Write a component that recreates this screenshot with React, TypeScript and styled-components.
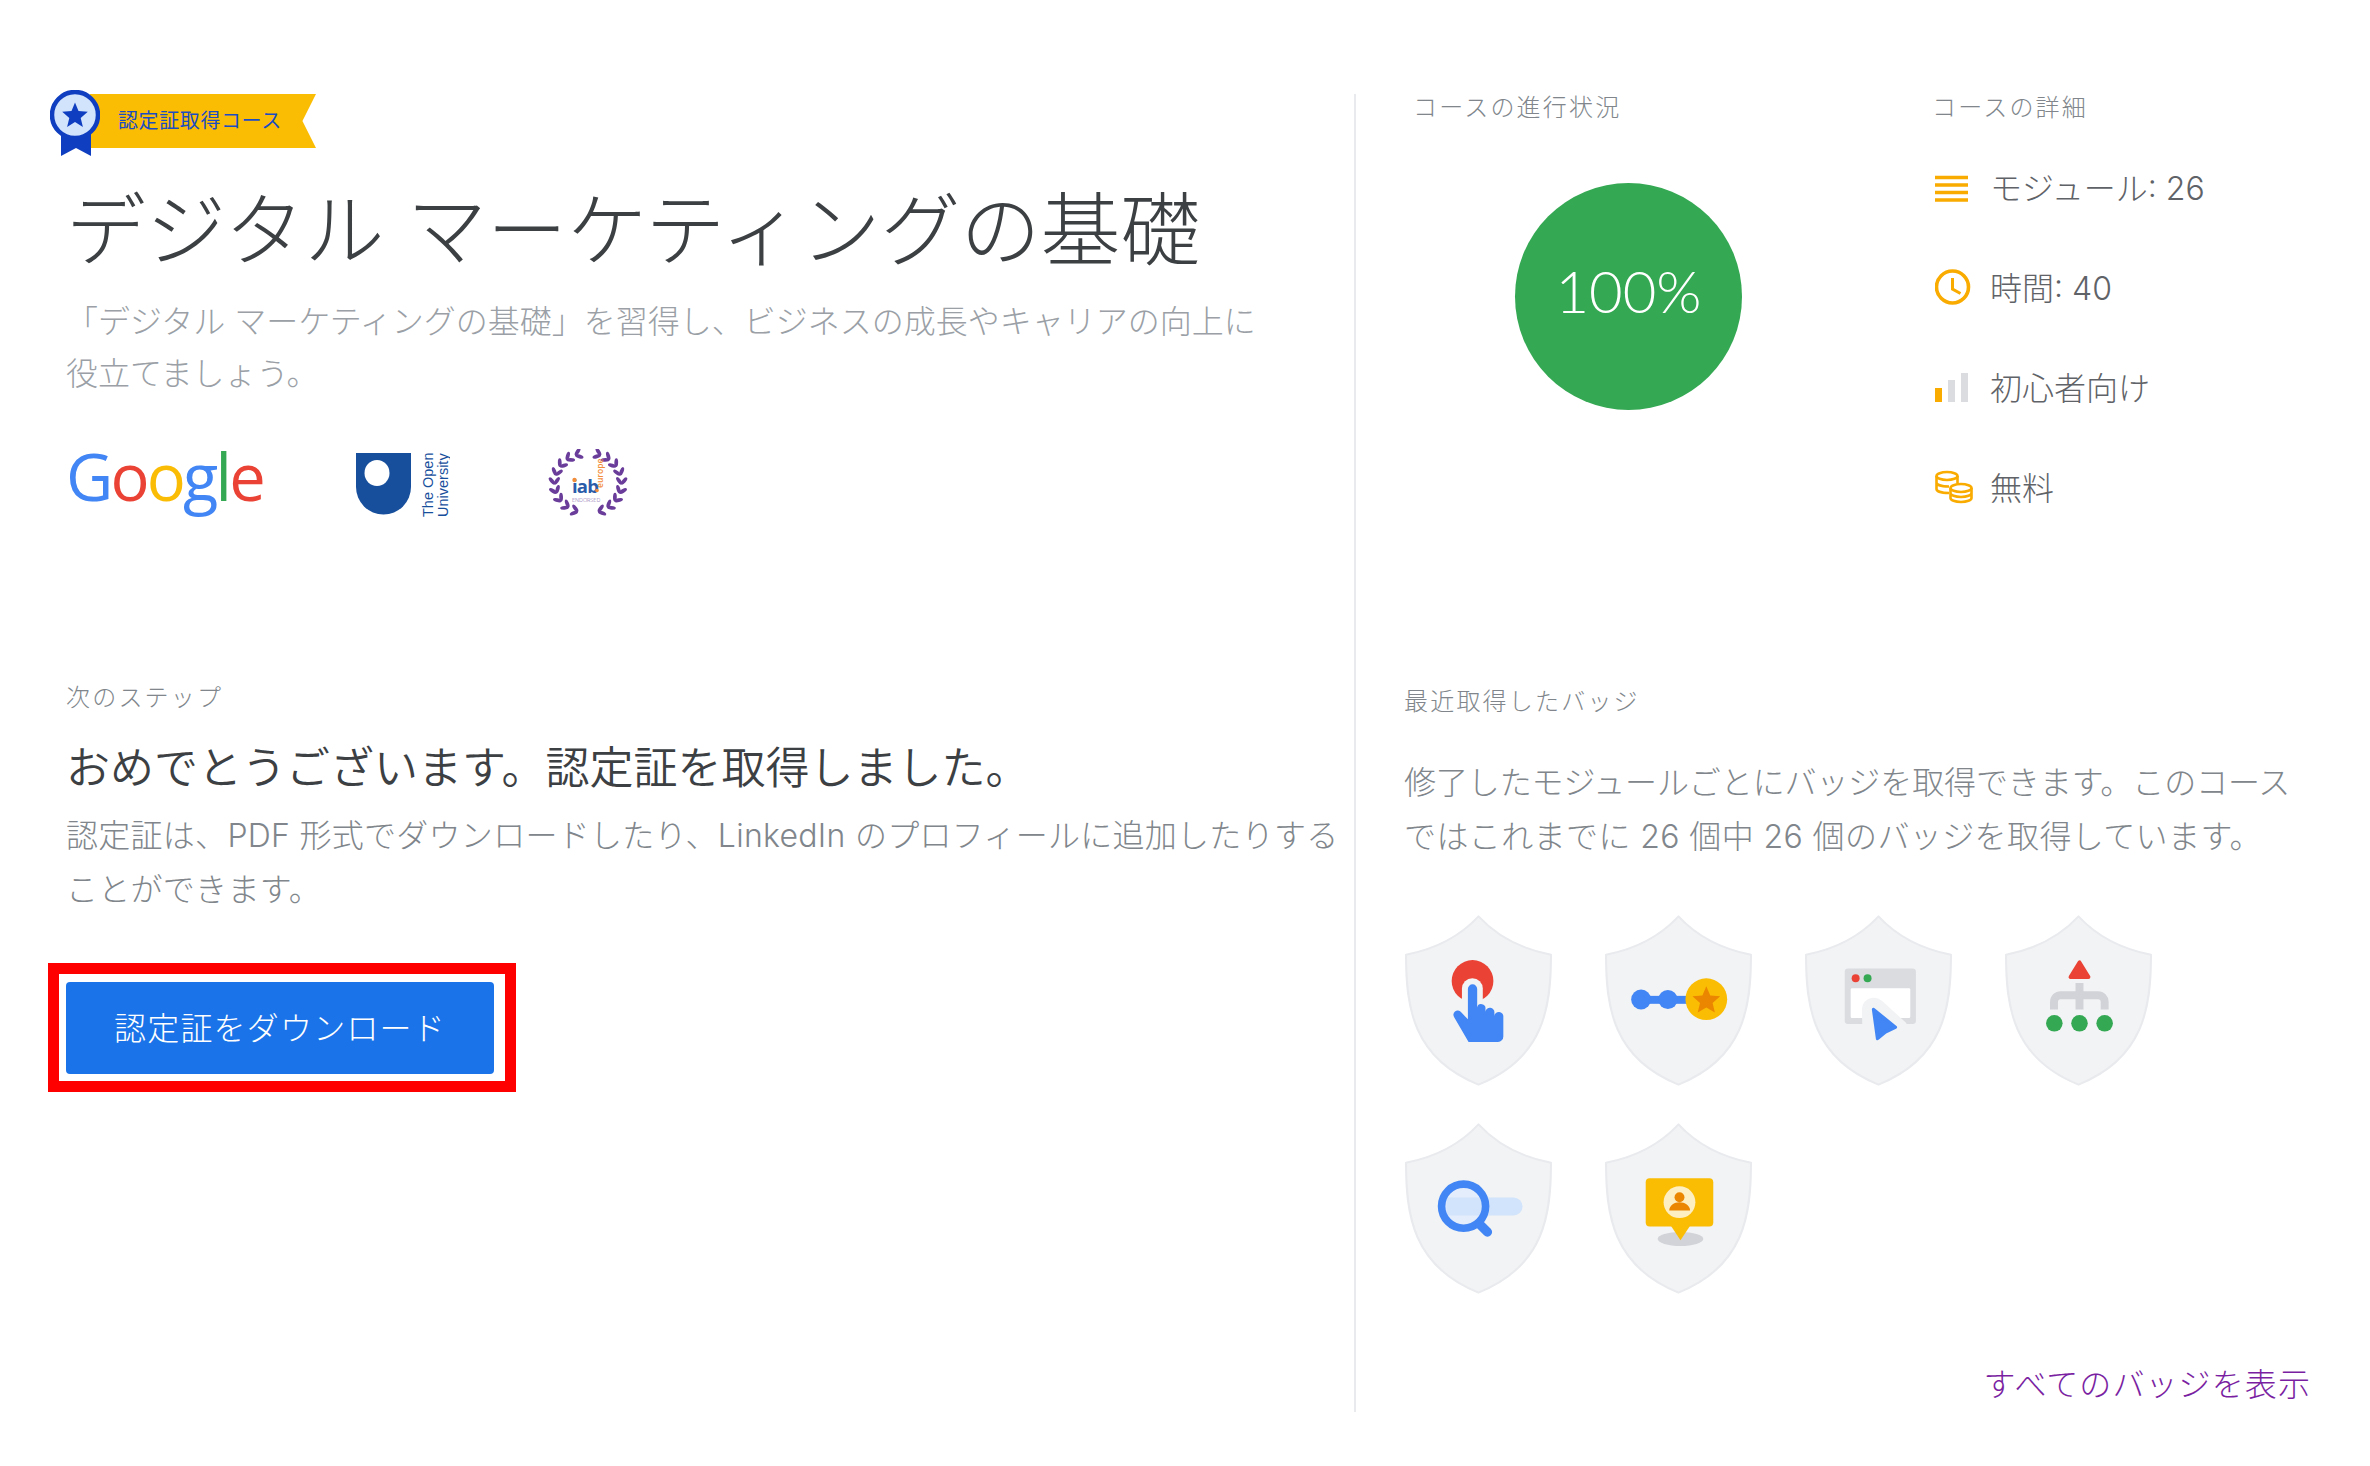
import React from "react";
import styled, { createGlobalStyle } from "styled-components";

const Global = createGlobalStyle`
  html, body { margin: 0; padding: 0; background: #fff; }
  body { font-family: Inter, "Noto Sans CJK JP", sans-serif; font-weight: 300; color: #80868b; }
`;

const Page = styled.div`
  width: 2370px;
  height: 1466px;
  display: grid;
  grid-template-columns: 1354px 1fr;
  align-items: start;
  padding-top: 90px;
  box-sizing: border-box;
  overflow: hidden;
`;

const LeftColumn = styled.main`
  padding-left: 66px;
  display: flex;
  flex-direction: column;
  align-items: flex-start;
`;

const Ribbon = styled.div`
  position: relative;
  margin-left: -16px;
  width: 266px;
  height: 66px;
  display: flex;
  align-items: flex-start;
`;

const RibbonBand = styled.div`
  margin-top: 4px;
  margin-left: 40px;
  width: 226px;
  height: 54px;
  background: #fbbc04;
  clip-path: polygon(0 0, 100% 0, 94% 50%, 100% 100%, 0 100%);
  color: #1a4cc2;
  font-size: 20px;
  font-weight: 400;
  letter-spacing: 0.6px;
  line-height: 54px;
  padding-left: 28px;
  box-sizing: border-box;
  white-space: nowrap;
`;

const Medal = styled.svg`
  position: absolute;
  left: 0;
  top: 0;
`;

const Title = styled.h1`
  margin: 26px 0 0;
  font-size: 80px;
  line-height: 96px;
  font-weight: 300;
  color: #3c4043;
  white-space: nowrap;
`;

const Lead = styled.p`
  margin: 18px 0 0;
  font-size: 32px;
  line-height: 52px;
  color: #9aa0a6;
  white-space: nowrap;
`;

const Logos = styled.div`
  margin-top: 49px;
  height: 68px;
  display: flex;
  align-items: flex-start;
`;

const GoogleLogo = styled.div`
  width: 290px;
  font-family: "Open Sans", sans-serif;
  font-size: 65px;
  line-height: 68px;
  font-weight: 500;
  letter-spacing: -2.8px;
  margin-top: -7px;
`;

const Letter = styled.span<{ $c: string }>`
  color: ${(p) => p.$c};
`;

const OuLogo = styled.svg`
  margin-right: 98px;
`;

const SectionLabel = styled.div`
  font-size: 24px;
  line-height: 32px;
  letter-spacing: 2.2px;
  color: #80868b;
  white-space: nowrap;
`;

const NextLabel = styled(SectionLabel)`
  margin-top: 165px;
`;

const Heading = styled.h2`
  margin: 24px 0 0;
  font-size: 44px;
  line-height: 60px;
  font-weight: 350;
  color: #3c4043;
  white-space: nowrap;
`;

const Body = styled.p`
  margin: 11px 0 0;
  font-size: 32px;
  line-height: 54px;
  letter-spacing: 0.28px;
  color: #80868b;
  white-space: nowrap;
`;

const Highlight = styled.div`
  margin-top: 46px;
  margin-left: -18px;
  border: 11px solid #ff0000;
  padding: 8px 11px 7px 7px;
  display: inline-flex;
`;

const DownloadButton = styled.button`
  width: 428px;
  height: 92px;
  border: 0;
  border-radius: 4px;
  background: #1a73e8;
  color: #fff;
  font-family: inherit;
  font-size: 32px;
  font-weight: 300;
  letter-spacing: 1.2px;
  padding: 0 0 5px;
`;

const RightColumn = styled.aside`
  margin-top: 4px;
  min-height: 1318px;
  border-left: 2px solid #e8eaed;
  padding-left: 48px;
  padding-right: 60px;
  display: flex;
  flex-direction: column;
`;

const TopRow = styled.div`
  height: 594px;
  padding-left: 9px;
  display: flex;
`;

const ProgressColumn = styled.section`
  width: 519px;
`;

const Label = styled(SectionLabel)`
  line-height: 28px;
`;

const ProgressCircle = styled.div`
  margin: 61px 0 0 102px;
  width: 227px;
  height: 227px;
  border-radius: 50%;
  background: #34a853;
  color: #fff;
  font-family: Lato, sans-serif;
  font-weight: 300;
  font-size: 58px;
  padding-bottom: 12px;
  box-sizing: border-box;
  display: flex;
  align-items: center;
  justify-content: center;
`;

const DetailList = styled.ul`
  list-style: none;
  margin: 15px 0 0;
  padding: 0;
`;

const DetailRow = styled.li`
  height: 100px;
  display: flex;
  align-items: center;
  gap: 17px;
  font-size: 32px;
  color: #5f6368;
  padding-left: 3px;
  white-space: nowrap;
`;

const DetailIcon = styled.svg`
  width: 38px;
  height: 36px;
  flex: none;
`;

const DetailText = styled.span`
  padding-bottom: 3px;
`;

const BadgeIntro = styled.p`
  margin: 40px 0 0;
  font-size: 32px;
  line-height: 54px;
  color: #80868b;
  white-space: nowrap;
`;

const IntroLine = styled.span<{ $spacing: number }>`
  display: block;
  letter-spacing: ${(p) => p.$spacing}px;
`;

const BadgeGrid = styled.div`
  margin: 51px 0 0 1px;
  display: grid;
  grid-template-columns: repeat(4, 147px);
  column-gap: 53px;
  row-gap: 37px;
`;

const Badge = styled.svg`
  width: 147px;
  height: 171px;
  display: block;
`;

const AllBadges = styled.a`
  margin: 67px -1px 0 0;
  align-self: flex-end;
  font-size: 32px;
  line-height: 48px;
  letter-spacing: 1.1px;
  color: #7b1fa2;
  text-decoration: none;
  white-space: nowrap;
`;

const Shield = () => (
  <path
    d="M237 17C300 85 380 118 456 133C456 290 436 445 237 525C38 445 18 290 18 133C94 118 174 85 237 17Z"
    fill="#f1f3f4"
    stroke="#e8eaed"
    strokeWidth="6"
    strokeLinejoin="round"
  />
);

const star = (cx: number, cy: number, R: number, r: number) =>
  Array.from({ length: 10 }, (_, i) => {
    const a = (-90 + i * 36) * (Math.PI / 180);
    const q = i % 2 ? r : R;
    return `${(cx + q * Math.cos(a)).toFixed(1)},${(cy + q * Math.sin(a)).toFixed(1)}`;
  }).join(" ");

const badges: React.ReactNode[] = [
  <>
    <circle cx="219" cy="212" r="63" fill="#ea4335" />
    <path d="M187 300V235A31.5 31.5 0 0 1 250 235V300Z" fill="#f1f3f4" />
    <path
      d="M205 236A14 14 0 0 1 233 236V292A12.5 12 0 0 1 258 296V305A13 13 0 0 1 285 308V318A13 13 0 0 1 312 320V380A16 16 0 0 1 296 396H207L164 322A12 12 0 0 1 184 306L205 328Z"
      fill="#4285f4"
    />
  </>,
  <>
    <rect x="124" y="257" width="150" height="24" fill="#4285f4" />
    <circle cx="124" cy="268" r="30" fill="#4285f4" />
    <circle cx="205" cy="268" r="29" fill="#4285f4" />
    <circle cx="321" cy="267" r="63" fill="#fbbc04" />
    <polygon points={star(321, 272, 44, 20)} fill="#ea8600" />
  </>,
  <>
    <rect x="135" y="174" width="215" height="168" rx="10" fill="#dadce0" />
    <circle cx="168" cy="204" r="12" fill="#ea4335" />
    <circle cx="204" cy="204" r="12" fill="#34a853" />
    <rect x="153" y="234" width="180" height="90" rx="4" fill="#fff" />
    <path d="M188 345L187 296A36 36 0 0 1 247 272L322 340L270 400H190Z" fill="#f1f3f4" />
    <path
      d="M222 298L288 352L258 366L234 386Z"
      fill="#4285f4"
      stroke="#4285f4"
      strokeWidth="10"
      strokeLinejoin="round"
    />
  </>,
  <>
    <path d="M240 156L213 200H267Z" fill="#ea4335" stroke="#ea4335" strokeWidth="12" strokeLinejoin="round" />
    <path d="M240 218V298M163 298V275A20 20 0 0 1 183 255H296A20 20 0 0 1 316 275V298" fill="none" stroke="#d2d3d8" strokeWidth="24" />
    <circle cx="164" cy="340" r="25" fill="#34a853" />
    <circle cx="240" cy="340" r="25" fill="#34a853" />
    <circle cx="316" cy="340" r="25" fill="#34a853" />
  </>,
  <>
    <circle cx="192" cy="264" r="66" fill="#e4edfb" />
    <path d="M140 238H343A27 27 0 0 1 343 292H140Z" fill="#d2e3fc" />
    <circle cx="192" cy="264" r="66.5" fill="none" stroke="#4285f4" strokeWidth="23" />
    <path d="M242 320L264 342" stroke="#4285f4" strokeWidth="28" strokeLinecap="round" />
  </>,
  <>
    <ellipse cx="243" cy="363" rx="69" ry="21" fill="#d2d3d8" />
    <rect x="138" y="180" width="204" height="145" rx="12" fill="#fbbc04" />
    <path d="M212 320H274L243 367Z" fill="#fbbc04" />
    <circle cx="240" cy="252" r="48" fill="#feefc3" />
    <circle cx="240" cy="237" r="15" fill="#ea8600" />
    <path d="M209 277C209 262 224 252 240 252C256 252 272 262 272 277Z" fill="#ea8600" />
  </>,
];

const leaves = (() => {
  const out: { x: number; y: number; r: number }[] = [];
  const rad = Math.PI / 180;
  for (let i = 0; i < 9; i++) {
    const a = (198 + i * 17.5) * rad;
    const cx = 40 + 33.5 * Math.sin(a);
    const cy = 34 - 30 * Math.cos(a);
    const tan = Math.atan2(30 * Math.sin(a), 33.5 * Math.cos(a)) / rad;
    for (const off of [38, -38]) {
      const d = tan + off;
      out.push({ x: cx + 4 * Math.cos(d * rad), y: cy + 4 * Math.sin(d * rad), r: d });
    }
  }
  return out;
})();

const IabLogo = () => (
  <svg width="80" height="68" viewBox="0 0 80 68">
    {[false, true].map((mirror) => (
      <g key={String(mirror)} transform={mirror ? "translate(80 0) scale(-1 1)" : undefined} fill="#6a3d9a">
        {leaves.map((l, i) => (
          <ellipse key={i} cx={l.x} cy={l.y} rx="4.4" ry="1.9" transform={`rotate(${l.r} ${l.x} ${l.y})`} />
        ))}
      </g>
    ))}
    <text x="24" y="44" fontFamily="Open Sans, sans-serif" fontWeight="700" fontSize="18.500" fill="#2a5caa" letterSpacing="-0.8">
      iab
    </text>
    <circle cx="26.500" cy="31" r="2.200" fill="#f28c38" />
    <circle cx="49" cy="41.500" r="1.800" fill="#f28c38" />
    <text transform="translate(54.500 39) rotate(-90)" fontFamily="Open Sans, sans-serif" fontWeight="600" fontSize="8.500" fill="#f28c38">
      europe
    </text>
    <text x="24" y="52.500" fontFamily="Open Sans, sans-serif" fontSize="5.500" fill="#7a5aa6">
      ENDORSED
    </text>
  </svg>
);

export default function App() {
  return (
    <>
      <Global />
      <Page>
        <LeftColumn>
          <Ribbon>
            <RibbonBand>認定証取得コース</RibbonBand>
            <Medal width="50" height="66" viewBox="0 0 50 66">
              <path d="M11 30H41V66L26 58L11 66Z" fill="#0f3fc0" />
              <circle cx="25" cy="25" r="23" fill="#d2e3fc" stroke="#0f3fc0" strokeWidth="4.5" />
              <polygon points={star(25, 26, 13.5, 6)} fill="#0f3fc0" />
            </Medal>
          </Ribbon>
          <Title>デジタル マーケティングの基礎</Title>
          <Lead>
            「デジタル マーケティングの基礎」を習得し、ビジネスの成長やキャリアの向上に
            <br />
            役立てましょう。
          </Lead>
          <Logos>
            <GoogleLogo>
              <Letter $c="#4285f4">G</Letter>
              <Letter $c="#ea4335">o</Letter>
              <Letter $c="#fbbc05">o</Letter>
              <Letter $c="#4285f4">g</Letter>
              <Letter $c="#34a853">l</Letter>
              <Letter $c="#ea4335">e</Letter>
            </GoogleLogo>
            <OuLogo width="94" height="68" viewBox="0 0 94 68">
              <path d="M0 4H55V38A27.5 27.5 0 0 1 0 38Z" fill="#174f9c" />
              <ellipse cx="21" cy="24" rx="12.5" ry="13" fill="#fff" />
              <text transform="translate(77 68) rotate(-90)" fontFamily="Liberation Sans, sans-serif" fontSize="14.5" fill="#174f9c">
                The Open
              </text>
              <text transform="translate(92 68) rotate(-90)" fontFamily="Liberation Sans, sans-serif" fontSize="14.5" fill="#174f9c">
                University
              </text>
            </OuLogo>
            <IabLogo />
          </Logos>
          <NextLabel>次のステップ</NextLabel>
          <Heading>おめでとうございます。認定証を取得しました。</Heading>
          <Body>
            認定証は、PDF 形式でダウンロードしたり、LinkedIn のプロフィールに追加したりする
            <br />
            ことができます。
          </Body>
          <Highlight>
            <DownloadButton>認定証をダウンロード</DownloadButton>
          </Highlight>
        </LeftColumn>
        <RightColumn>
          <TopRow>
            <ProgressColumn>
              <Label>コースの進行状況</Label>
              <ProgressCircle>100%</ProgressCircle>
            </ProgressColumn>
            <section>
              <Label>コースの詳細</Label>
              <DetailList>
                <DetailRow>
                  <DetailIcon viewBox="0 0 38 36">
                    <path d="M0 8.5H33M0 16H33M0 23.500H33M0 31H33" stroke="#f9ab00" strokeWidth="3.6" fill="none" />
                  </DetailIcon>
                  <DetailText>モジュール: 26</DetailText>
                </DetailRow>
                <DetailRow>
                  <DetailIcon viewBox="0 0 38 36">
                    <circle cx="17.500" cy="18" r="16" fill="none" stroke="#f9ab00" strokeWidth="3.6" />
                    <path d="M17.500 9V20L25.500 24.500" fill="none" stroke="#f9ab00" strokeWidth="3" />
                  </DetailIcon>
                  <DetailText>時間: 40</DetailText>
                </DetailRow>
                <DetailRow>
                  <DetailIcon viewBox="0 0 38 36">
                    <rect x="0" y="19" width="7" height="14" fill="#f9ab00" />
                    <rect x="13" y="11" width="7" height="22" fill="#dadce0" />
                    <rect x="26" y="4" width="7" height="29" fill="#dadce0" />
                  </DetailIcon>
                  <DetailText>初心者向け</DetailText>
                </DetailRow>
                <DetailRow>
                  <DetailIcon viewBox="0 0 38 36">
                    <g fill="none" stroke="#f9ab00" strokeWidth="2.6">
                      <ellipse cx="12" cy="7" rx="10.500" ry="4" />
                      <path d="M1.500 7V20C1.500 22 6 24 14 24M1.500 13.500C1.500 15.500 6 17.500 14 17.500M22.500 7V14" />
                      <ellipse cx="26" cy="19" rx="10.500" ry="4" fill="#fff" />
                      <path d="M15.500 19V29C15.500 31 20 33 26 33C32 33 36.500 31 36.500 29V19M15.500 24C15.500 26 20 28 26 28C32 28 36.500 26 36.500 24" />
                    </g>
                  </DetailIcon>
                  <DetailText>無料</DetailText>
                </DetailRow>
              </DetailList>
            </section>
          </TopRow>
          <Label>最近取得したバッジ</Label>
          <BadgeIntro>
            <IntroLine $spacing={-0.1}>修了したモジュールごとにバッジを取得できます。このコース</IntroLine>
            <IntroLine $spacing={0.4}>ではこれまでに 26 個中 26 個のバッジを取得しています。</IntroLine>
          </BadgeIntro>
          <BadgeGrid>
            {badges.map((content, i) => (
              <Badge key={i} viewBox="15 14 444 514">
                <Shield />
                {content}
              </Badge>
            ))}
          </BadgeGrid>
          <AllBadges href="#">すべてのバッジを表示</AllBadges>
        </RightColumn>
      </Page>
    </>
  );
}
